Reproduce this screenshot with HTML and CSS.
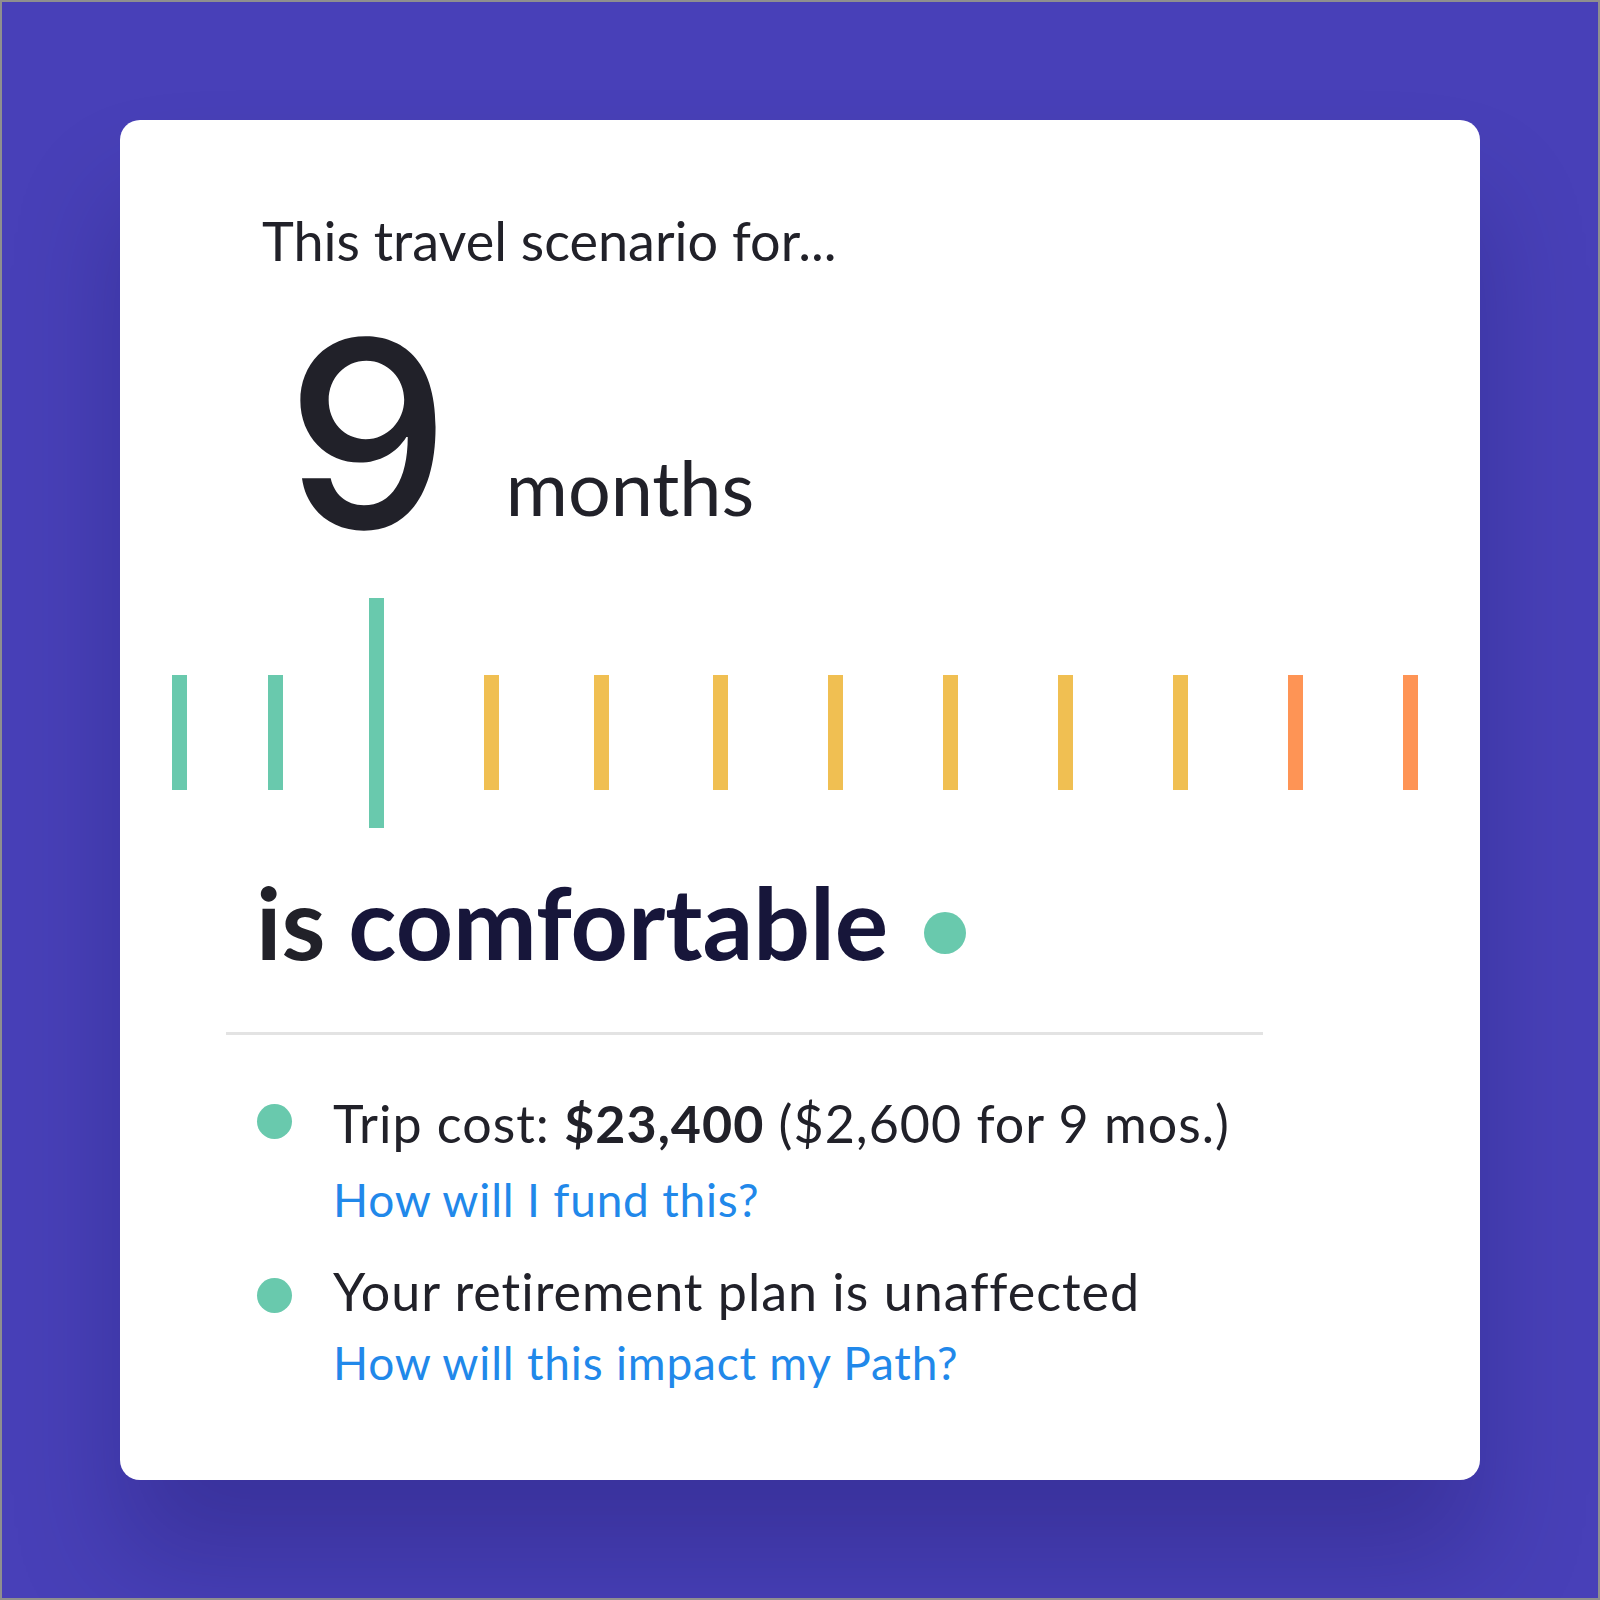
FILE: index.html
```html
<!DOCTYPE html>
<html lang="en">
<head>
<meta charset="utf-8">
<title>Travel scenario</title>
<link rel="stylesheet" href="styles.css">
</head>
<body>
<div class="frame">
  <section class="card">
    <p class="intro">This travel scenario for...</p>
    <div class="duration">
      <span class="num">9</span>
      <span class="unit">months</span>
    </div>
    <div class="scale">
      <span class="tick good"></span>
      <span class="tick good"></span>
      <span class="tick good current"></span>
      <span class="tick warn"></span>
      <span class="tick warn"></span>
      <span class="tick warn"></span>
      <span class="tick warn"></span>
      <span class="tick warn"></span>
      <span class="tick warn"></span>
      <span class="tick warn"></span>
      <span class="tick risk"></span>
      <span class="tick risk"></span>
    </div>
    <h2 class="verdict"><span class="is">is</span> comfortable <span class="status-dot"></span></h2>
    <hr class="divider">
    <ul class="facts">
      <li class="fact fact-cost">
        <span class="bullet"></span>
        <div class="fact-body">
          <p class="fact-text">Trip cost: <b>$23,400</b> ($2,600 for 9 mos.)</p>
          <a class="fact-link" href="#">How will I fund this?</a>
        </div>
      </li>
      <li class="fact fact-plan">
        <span class="bullet"></span>
        <div class="fact-body">
          <p class="fact-text">Your retirement plan is unaffected</p>
          <a class="fact-link" href="#">How will this impact my Path?</a>
        </div>
      </li>
    </ul>
  </section>
</div>
</body>
</html>
```

FILE: styles.css
```css
* { box-sizing: border-box; }

html, body {
  margin: 0;
  padding: 0;
}

body {
  font-family: "Lato", "Roboto", sans-serif;
  color: #212129;
}

.frame {
  width: 1600px;
  height: 1600px;
  border: 2px solid #8f8f8f;
  background: #4840b8;
  padding: 118px;
  overflow: hidden;
}

.card {
  width: 1360px;
  height: 1360px;
  background: #ffffff;
  border-radius: 20px;
  box-shadow: 0 80px 110px rgba(10, 5, 60, 0.22);
  padding-top: 89px;
  display: flex;
  flex-direction: column;
  align-items: flex-start;
}

.intro {
  margin: 0 0 0 142px;
  font-size: 54px;
  line-height: 1.2;
  font-weight: 400;
  color: #212129;
}

.duration {
  margin: 30px 0 0 166px;
  display: flex;
  align-items: flex-end;
  gap: 56px;
}

.num {
  font-family: "Inter", "Roboto", sans-serif;
  font-size: 260px;
  line-height: 1;
  font-weight: 500;
  color: #212129;
}

.unit {
  font-size: 75.5px;
  line-height: 1;
  margin-bottom: 39px;
  color: #212129;
}

.scale {
  margin: 34px 0 0 52px;
  height: 230px;
  display: flex;
  align-items: flex-start;
  gap: 100px;
}

.tick {
  width: 15px;
  height: 115px;
  margin-top: 77px;
  flex: none;
}

.tick:nth-child(2) { margin-left: -19px; }
.tick:nth-child(3) { margin-left: -14px; }
.tick:nth-child(5) { margin-left: -5px; }
.tick:nth-child(6) { margin-left: 4px; }

.tick.current {
  height: 230px;
  margin-top: 0;
}

.good { background: #69c9ad; }
.warn { background: #f0bf52; }
.risk { background: #fe9455; }

.verdict {
  margin: 33px 0 0 136px;
  font-size: 100px;
  line-height: 1.2;
  font-weight: 700;
  color: #17163a;
  display: flex;
  align-items: center;
}

.verdict .is {
  color: #212129;
  margin-right: 0.23em;
}

.status-dot {
  width: 42px;
  height: 42px;
  border-radius: 50%;
  background: #69c9ad;
  margin-left: 36px;
  margin-top: 24px;
}

.divider {
  margin: 51px 0 0 106px;
  width: 1037px;
  height: 3px;
  border: 0;
  background: #e3e3e3;
}

.facts {
  list-style: none;
  margin: 57px 0 0 137px;
  padding: 0;
}

.fact {
  display: flex;
  align-items: flex-start;
  gap: 41px;
}

.fact-plan { margin-top: 33px; }

.bullet {
  width: 35px;
  height: 35px;
  border-radius: 50%;
  background: #69c9ad;
  margin-top: 12px;
  flex: none;
}

.fact-plan .bullet { margin-top: 18px; }

.fact-body {
  display: flex;
  flex-direction: column;
  align-items: flex-start;
}

.fact-text {
  margin: 0;
  font-size: 52px;
  line-height: 1.2;
  letter-spacing: 1px;
  color: #212129;
}

.fact-text b {
  font-weight: 700;
}

.fact-link {
  font-size: 46px;
  line-height: 1.2;
  letter-spacing: 0.8px;
  color: #2188ea;
  text-decoration: none;
}

.fact-cost .fact-link { margin-top: 18px; }
.fact-plan .fact-link { margin-top: 12px; }
```
